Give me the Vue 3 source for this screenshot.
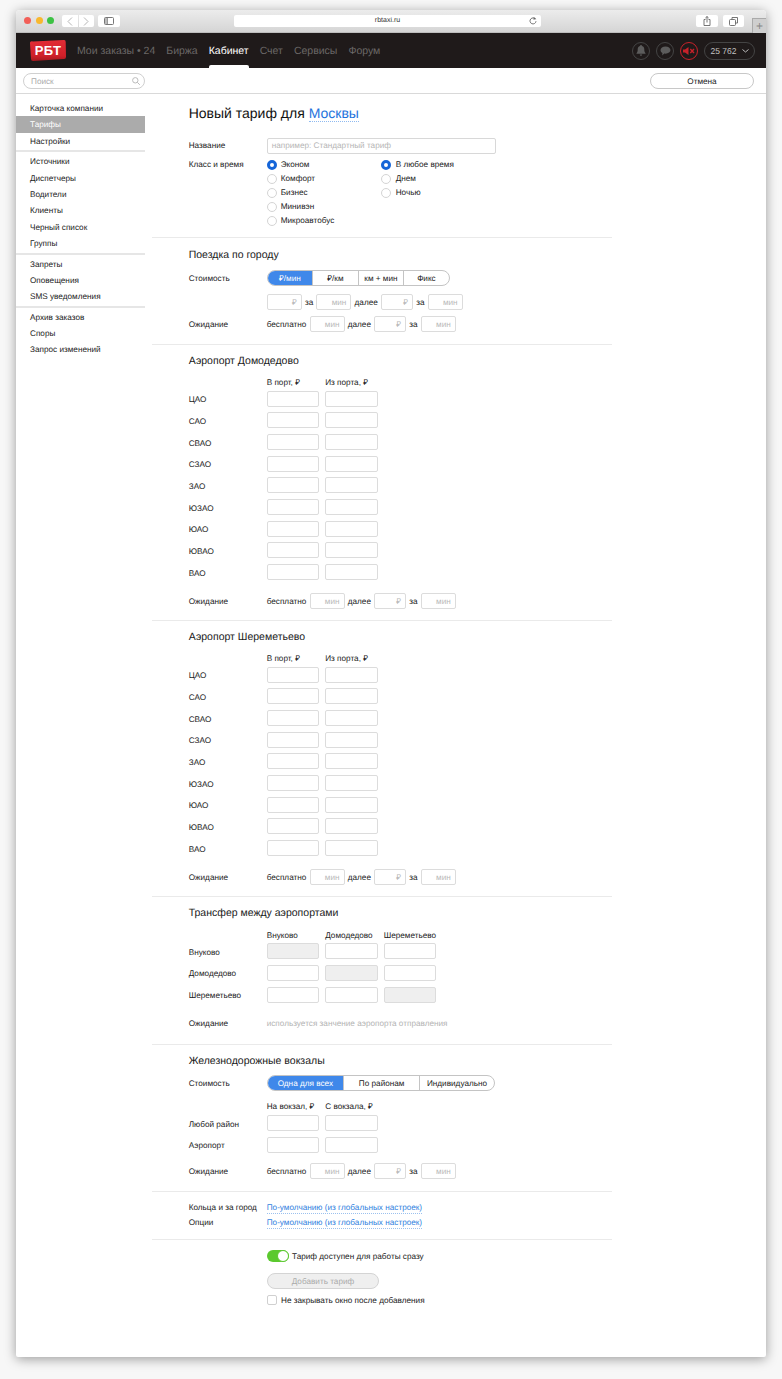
<script setup>
const nav = [
  { t: 'Мои заказы • 24' }, { t: 'Биржа' }, { t: 'Кабинет', active: true },
  { t: 'Счет' }, { t: 'Сервисы' }, { t: 'Форум' }
]
const sideGroups = [
  [{ t: 'Карточка компании' }, { t: 'Тарифы', active: true }, { t: 'Настройки' }],
  [{ t: 'Источники' }, { t: 'Диспетчеры' }, { t: 'Водители' }, { t: 'Клиенты' }, { t: 'Черный список' }, { t: 'Группы' }],
  [{ t: 'Запреты' }, { t: 'Оповещения' }, { t: 'SMS уведомления' }],
  [{ t: 'Архив заказов' }, { t: 'Споры' }, { t: 'Запрос изменений' }]
]
const classes = ['Эконом', 'Комфорт', 'Бизнес', 'Минивэн', 'Микроавтобус']
const times = ['В любое время', 'Днем', 'Ночью']
const districts = ['ЦАО', 'САО', 'СВАО', 'СЗАО', 'ЗАО', 'ЮЗАО', 'ЮАО', 'ЮВАО', 'ВАО']
const airports = ['Аэропорт Домодедово', 'Аэропорт Шереметьево']
const transfers = ['Внуково', 'Домодедово', 'Шереметьево']
</script>

<template>
  <div class="window">
    <div class="toolbar">
      <div class="lights"><i class="red"></i><i class="yellow"></i><i class="green"></i></div>
      <div class="tb-btn back">
        <svg width="6" height="9" viewBox="0 0 6 9"><path d="M5 .5 1 4.5l4 4" fill="none" stroke="#b5b5b5" /></svg>
      </div>
      <div class="tb-btn fwd">
        <svg width="6" height="9" viewBox="0 0 6 9"><path d="M1 .5l4 4-4 4" fill="none" stroke="#b5b5b5" /></svg>
      </div>
      <div class="tb-btn side">
        <svg width="10" height="8" viewBox="0 0 10 8"><rect x=".5" y=".5" width="9" height="7" rx="1" fill="none" stroke="#777" /><path d="M3.5 .5v7" stroke="#777" /><path d="M1 1h2.5v6H1z" fill="#bbb" /></svg>
      </div>
      <div class="address">
        <span>rbtaxi.ru</span>
        <svg class="reload" width="8" height="8" viewBox="0 0 8 8"><path d="M6.6 2.4A3 3 0 1 0 7 4.2" fill="none" stroke="#666" stroke-width=".9" /><path d="M4.6 0v3l2.4-1.5z" fill="#666" /></svg>
      </div>
      <div class="tb-btn share">
        <svg width="8" height="10" viewBox="0 0 8 10"><path d="M2.5 3.5H1v6h6v-6H5.5M4 6.5V.6M2.4 2 4 .5 5.6 2" fill="none" stroke="#666" stroke-width=".9" /></svg>
      </div>
      <div class="tb-btn tabs">
        <svg width="9" height="9" viewBox="0 0 9 9"><path d="M3 2V.5h5.500v5.500H6.500" fill="none" stroke="#666" stroke-width=".9" /><rect x=".5" y="2.500" width="6" height="6" rx="1" fill="none" stroke="#666" stroke-width=".9" /></svg>
      </div>
      <div class="plus">+</div>
    </div>

    <header class="head">
      <div class="logo">
        <svg class="logo-shape" width="36" height="21" viewBox="0 0 36 21">
          <defs><linearGradient id="lg" x1="0" y1="0" x2="0" y2="1"><stop offset="0" stop-color="#e32d36" /><stop offset=".75" stop-color="#cf2029" /><stop offset="1" stop-color="#a5171e" /></linearGradient></defs>
          <path d="M3 1.500 33.500 0a2 2 0 0 1 2.200 2l.3 15a2 2 0 0 1-2 2L3 21a2 2 0 0 1-2-2L0 3.500a2 2 0 0 1 3-2z" fill="url(#lg)" />
        </svg>
        <span>РБТ</span>
      </div>
      <nav class="nav">
        <span v-for="n in nav" :key="n.t" class="nav-item" :class="{ on: n.active }">{{ n.t }}</span>
      </nav>
      <div class="head-right">
        <span class="circle">
          <svg width="10" height="11" viewBox="0 0 10 11"><path d="M5 0a1 1 0 0 1 1 1c1.700.5 2.300 1.900 2.300 3.500 0 2 .4 2.800 1.200 3.700v.6H.5v-.6c.8-.9 1.200-1.700 1.200-3.700C1.700 2.900 2.300 1.500 4 1a1 1 0 0 1 1-1zM3.800 9.500h2.400a1.200 1.200 0 0 1-2.400 0z" fill="#5c5c5c" /></svg>
        </span>
        <span class="circle">
          <svg width="11" height="10" viewBox="0 0 11 10"><path d="M5.500 .5c2.800 0 5 1.600 5 3.600s-2.200 3.600-5 3.600c-.4 0-.8 0-1.200-.1L2.200 9.500l.2-2.400C1.200 6.400.5 5.300.5 4.100c0-2 2.200-3.600 5-3.600z" fill="#5c5c5c" /></svg>
        </span>
        <span class="circle mute">
          <svg width="12" height="8" viewBox="0 0 12 8"><path d="M0 2.500h2L5.500 0v8L2 5.500H0z" fill="#c8222a" /><path d="M7.300 2l3.700 4M11 2 7.300 6" stroke="#c8222a" stroke-width="1.400" /></svg>
        </span>
        <span class="balance">25 762
          <svg width="7" height="4" viewBox="0 0 7 4"><path d="M.5.5l3 2.500 3-2.500" fill="none" stroke="#bbb" /></svg>
        </span>
      </div>
    </header>

    <div class="subbar">
      <div class="search">
        <span>Поиск</span>
        <svg width="8" height="8" viewBox="0 0 8 8"><circle cx="3.300" cy="3.300" r="2.700" fill="none" stroke="#bbb" /><path d="M5.300 5.300 7.800 7.800" stroke="#bbb" /></svg>
      </div>
      <button class="cancel">Отмена</button>
    </div>

    <div class="body">
      <aside class="sidebar">
        <div v-for="(g, i) in sideGroups" :key="i" class="side-group">
          <div v-for="s in g" :key="s.t" class="side-item" :class="{ on: s.active }">{{ s.t }}</div>
        </div>
      </aside>

      <main class="main">
        <section class="sec sec-first">
          <h1 class="title">Новый тариф для <a class="city">Москвы</a></h1>
          <div class="row name-row">
            <label class="lbl plain">Название</label>
            <div class="name-input">например: Стандартный тариф</div>
          </div>
          <div class="choice-row">
            <label class="lbl plain radio-lbl">Класс и время</label>
            <div class="radios">
              <div v-for="(c, i) in classes" :key="c" class="radio-item"><i class="radio" :class="{ sel: i === 0 }"></i>{{ c }}</div>
            </div>
            <div class="radios">
              <div v-for="(c, i) in times" :key="c" class="radio-item"><i class="radio" :class="{ sel: i === 0 }"></i>{{ c }}</div>
            </div>
          </div>
        </section>

        <section class="sec sec-city">
          <h2 class="heading">Поездка по городу</h2>
          <div class="row seg-row">
            <label class="lbl">Стоимость</label>
            <div class="seg seg-four">
              <span class="on">₽/мин</span><span>₽/км</span><span>км + мин</span><span>Фикс</span>
            </div>
          </div>
          <div class="row price-row">
            <span class="lbl"></span>
            <div class="inline">
              <div class="inp sm">₽</div><span>за</span><div class="inp sm">мин</div>
              <span>далее</span><div class="inp sm rub">₽</div><span>за</span><div class="inp sm">мин</div>
            </div>
          </div>
          <div class="row wait">
            <label class="lbl">Ожидание</label>
            <div class="inline">
              <span>бесплатно</span><div class="inp sm">мин</div>
              <span>далее</span><div class="inp sm rub">₽</div><span>за</span><div class="inp sm">мин</div>
            </div>
          </div>
        </section>

        <section v-for="a in airports" :key="a" class="sec sec-air">
          <h2 class="heading">{{ a }}</h2>
          <div class="row cols">
            <span class="lbl"></span>
            <span class="col">В порт, ₽</span><span class="col">Из порта, ₽</span>
          </div>
          <div class="grid-rows">
            <div v-for="d in districts" :key="d" class="row grid-row">
              <label class="lbl">{{ d }}</label>
              <div class="inp lg"></div><div class="inp lg"></div>
            </div>
          </div>
          <div class="row wait wait-air">
            <label class="lbl">Ожидание</label>
            <div class="inline">
              <span>бесплатно</span><div class="inp sm">мин</div>
              <span>далее</span><div class="inp sm rub">₽</div><span>за</span><div class="inp sm">мин</div>
            </div>
          </div>
        </section>

        <section class="sec sec-transfer">
          <h2 class="heading">Трансфер между аэропортами</h2>
          <div class="row cols">
            <span class="lbl"></span>
            <span v-for="t in transfers" :key="t" class="col">{{ t }}</span>
          </div>
          <div class="grid-rows">
            <div v-for="(t, i) in transfers" :key="t" class="row grid-row">
              <label class="lbl">{{ t }}</label>
              <div v-for="(c, j) in transfers" :key="c" class="inp lg" :class="{ dis: i === j }"></div>
            </div>
          </div>
          <div class="row wait wait-transfer">
            <label class="lbl">Ожидание</label>
            <span class="hint">используется занчение аэропорта отправления</span>
          </div>
        </section>

        <section class="sec sec-rail">
          <h2 class="heading">Железнодорожные вокзалы</h2>
          <div class="row seg-row rail-seg">
            <label class="lbl">Стоимость</label>
            <div class="seg seg-three">
              <span class="on">Одна для всех</span><span>По районам</span><span>Индивидуально</span>
            </div>
          </div>
          <div class="row cols rail-cols">
            <span class="lbl"></span>
            <span class="col">На вокзал, ₽</span><span class="col">С вокзала, ₽</span>
          </div>
          <div class="grid-rows rail-rows">
            <div v-for="d in ['Любой район', 'Аэропорт']" :key="d" class="row grid-row">
              <label class="lbl">{{ d }}</label>
              <div class="inp lg"></div><div class="inp lg"></div>
            </div>
          </div>
          <div class="row wait wait-rail">
            <label class="lbl">Ожидание</label>
            <div class="inline">
              <span>бесплатно</span><div class="inp sm">мин</div>
              <span>далее</span><div class="inp sm rub">₽</div><span>за</span><div class="inp sm">мин</div>
            </div>
          </div>
        </section>

        <section class="sec sec-links">
          <div class="row link-row"><label class="lbl plain">Кольца и за город</label><a class="link">По-умолчанию (из глобальных настроек)</a></div>
          <div class="row link-row"><label class="lbl plain">Опции</label><a class="link">По-умолчанию (из глобальных настроек)</a></div>
        </section>

        <section class="final">
          <div class="toggle-row"><i class="toggle"><b></b></i>Тариф доступен для работы сразу</div>
          <button class="add">Добавить тариф</button>
          <div class="check-row"><i class="check"></i>Не закрывать окно после добавления</div>
        </section>
      </main>
    </div>
  </div>
</template>

<style>
html, body { margin: 0; background: #f7f7f7; }
#app { height: 1379px; overflow: hidden; }
</style>

<style scoped>
* { box-sizing: border-box; }
.window {
  width: 750px; height: 1347px; margin: 10px 0 0 16px; background: #fff;
  border-radius: 4px 4px 2px 2px; overflow: hidden; position: relative;
  box-shadow: 0 2px 12px rgba(0,0,0,.38);
  font: 8.200px/12px "Liberation Sans", Arial, sans-serif; color: #222;
  text-rendering: geometricPrecision;
}
.toolbar {
  height: 23px; display: flex; align-items: flex-start; padding-top: 5px;
  background: linear-gradient(#ececec, #d5d5d5); border-bottom: 1px solid #bdbdbd;
}
.lights { display: flex; gap: 4.500px; margin: 2px 0 0 8px; width: 38px; }
.lights i { width: 7px; height: 7px; border-radius: 50%; flex: none; }
.red { background: #f25f58; } .yellow { background: #f8b82e; } .green { background: #3cc244; }
.tb-btn { height: 12px; background: #fff; border-radius: 2px; display: flex; align-items: center; justify-content: center; }
.back { width: 16px; margin-left: 0; border-radius: 2px 0 0 2px; }
.fwd { width: 15px; margin-left: 1px; border-radius: 0 2px 2px 0; }
.side { width: 22px; margin-left: 4px; }
.address {
  width: 308px; height: 12px; margin-left: 114px; background: #fff; border-radius: 2px;
  display: flex; align-items: center; justify-content: center; position: relative; font-size: 7px; color: #333;
}
.reload { position: absolute; right: 4px; top: 2px; }
.share { width: 22px; margin-left: 155px; }
.tabs { width: 21px; margin-left: 5px; }
.plus {
  width: 14px; height: 15px; margin: 3px 0 0 8px; border-left: 1px solid #aaa; border-top: 1px solid #aaa;
  color: #888; font-size: 12px; line-height: 14px; text-align: center; background: #cfcfcf;
}
.head { height: 35px; background: #1f1a1a; display: flex; align-items: center; position: relative; }
.logo {
  width: 36px; height: 21px; margin: 0 0 0 14px; position: relative;
  color: #fff; font-weight: 700; font-size: 13px; line-height: 21px; text-align: center; letter-spacing: .3px;
}
.logo-shape { position: absolute; left: 0; top: 0; }
.logo span { position: relative; }
.nav { display: flex; gap: 11px; margin-left: 11px; align-self: stretch; }
.nav-item { font-size: 10.500px; line-height: 36px; color: #6b6867; position: relative; }
.nav-item.on { color: #fff; }
.nav-item.on::after {
  content: ""; position: absolute; left: 0; right: 0; bottom: 0; height: 3px;
  background: #fff; border-radius: 2px 2px 0 0;
}
.head-right { margin-left: auto; margin-right: 11px; display: flex; align-items: center; gap: 6px; }
.circle {
  width: 18px; height: 18px; border-radius: 50%; border: 1px solid #444;
  display: flex; align-items: center; justify-content: center;
}
.circle.mute { border-color: #c8222a; }
.balance {
  width: 51px; height: 18px; border: 1px solid #444; border-radius: 9px; color: #c4c4c4;
  display: flex; align-items: center; justify-content: center; gap: 5px; font-size: 8.500px;
}
.subbar {
  height: 26px; display: flex; align-items: flex-start; justify-content: space-between;
  padding: 5px 12px 0 7px; border-bottom: 1px solid #d9d9d9;
}
.search {
  width: 122px; height: 16px; border: 1px solid #d0d0d0; border-radius: 8px; padding: 0 4px 0 7px;
  display: flex; align-items: center; justify-content: space-between; color: #aaa;
}
.search span { padding-top: 2px; }
.cancel {
  width: 104px; height: 16px; padding: 0; border: 1px solid #c8c8c8; border-radius: 8px; background: #fff;
  font: 8.200px "Liberation Sans", Arial, sans-serif; color: #222; text-rendering: geometricPrecision;
}
.body { display: flex; }
.sidebar { width: 129px; flex: none; padding-top: 6px; }
.side-group { padding-bottom: 1px; margin-bottom: 1px; border-bottom: 2px solid #e6e6e6; }
.side-group:last-child { border: 0; }
.side-item { height: 16.400px; line-height: 18.400px; padding-left: 14px; color: #222; }
.side-item.on { background: #ababab; color: #fff; }
.main { width: 460px; margin-left: 7px; }
.sec { border-bottom: 1px solid #eaeaea; padding-left: 36.700px; }
.sec-first { height: 144px; padding-top: 10px; }
.title { margin: 0; font-size: 14px; line-height: 18px; font-weight: 400; color: #111; }
.city { color: #1e73dc; border-bottom: 1px dotted #8fbaf0; }
.row { display: flex; align-items: center; }
.lbl { width: 78px; flex: none; padding-top: 2px; }
.lbl.plain { padding-top: 0; }
.name-row { margin-top: 16px; height: 16px; }
.name-input {
  width: 229px; height: 16px; border: 1px solid #d8d8d8; border-radius: 2px;
  color: #b5b5b5; line-height: 14px; padding-left: 4px;
}
.choice-row { display: flex; margin-top: 4px; }
.radio-lbl { line-height: 14px; }
.radios { width: 114px; }
.radio-item { display: flex; align-items: center; height: 14px; }
.radio {
  width: 10px; height: 10px; border-radius: 50%; border: 1px solid #d4d4d4; margin-right: 4px; flex: none;
  background: #fff;
}
.radio.sel { border: 3px solid #1565d8; }
.radios + .radios .radio { margin-right: 5px; }
.heading { margin: 0; font-size: 10.500px; line-height: 18px; height: 16px; font-weight: 400; color: #1a1a1a; }
.sec-city { height: 107px; padding-top: 8px; }
.seg-row { margin-top: 8px; height: 16px; }
.seg { display: flex; height: 16px; border: 1px solid #c4c4c4; border-radius: 8px; overflow: hidden; }
.seg span { text-align: center; line-height: 16px; border-left: 1px solid #c4c4c4; color: #222; }
.seg span:first-child { border-left: 0; }
.seg .on { background: #3f88ea; color: #fff; }
.seg-four { width: 183px; }
.seg-four span { width: 46px; } .seg-four span:first-child { width: 45px; }
.seg-three { width: 228px; }
.seg-three span:nth-child(1) { width: 76px; } .seg-three span:nth-child(2) { width: 77px; } .seg-three span:nth-child(3) { width: 75px; }
.price-row { margin-top: 8px; height: 16px; }
.wait { height: 16px; margin-top: 6px; }
.inline { display: flex; align-items: center; gap: 3.200px; }
.inline > span { padding-top: 2px; }
.inp { height: 16px; border: 1px solid #dcdcdc; border-radius: 2px; background: #fff; color: #b8b8b8; flex: none; }
.sm { width: 35px; text-align: right; padding-right: 4px; line-height: 16px; }
.rub { width: 32px; }
.lg { width: 52.500px; margin-right: 6px; }
.lg.dis { background: #efefef; }
.sec-air { height: 276px; padding-top: 7px; }
.cols { margin-top: 9px; height: 12px; }
.col { width: 58.500px; flex: none; white-space: nowrap; }
.grid-rows { margin-top: -1px; }
.grid-row { height: 21.670px; }
.grid-row .lbl { padding-top: 3px; }
.wait-air { margin-top: 9.800px; }
.sec-transfer { height: 148px; padding-top: 7px; }
.sec-transfer .cols { margin-top: 10px; }
.sec-transfer .grid-rows { margin-top: -1.500px; }
.wait-transfer { margin-top: 10px; }
.hint { color: #b3b3b3; padding-top: 2px; }
.sec-rail { height: 147px; padding-top: 7px; }
.rail-seg { margin-top: 7px; }
.rail-cols { margin-top: 10px; }
.rail-rows { margin-top: -.5px; }
.wait-rail { margin-top: 7.500px; }
.sec-links { height: 48px; padding-top: 8px; }
.link-row { height: 15px; }
.link { color: #2f7fe0; border-bottom: 1px dotted #9cc1ee; line-height: 11px; }
.final { padding: 10px 0 0 115px; }
.toggle-row { display: flex; align-items: flex-start; height: 12px; line-height: 14px; }
.toggle { width: 22px; height: 12px; border-radius: 6px; background: #5bc92e; margin-right: 3px; position: relative; flex: none; }
.toggle b { position: absolute; right: 0; top: 0; width: 12px; height: 12px; border-radius: 50%; background: #fff; border: 1px solid #5bc92e; }
.add {
  display: block; width: 112px; height: 16px; margin-top: 11px; padding: 0; border: 1px solid #d4d4d4; border-radius: 8px;
  background: #efefef; color: #aaa; font: 8.200px "Liberation Sans", Arial, sans-serif; text-rendering: geometricPrecision;
}
.check-row { display: flex; align-items: flex-start; height: 12px; margin-top: 5px; line-height: 14px; }
.check { width: 10px; height: 10px; margin-top: 1px; border: 1px solid #d0d0d0; border-radius: 2px; margin-right: 4px; flex: none; }
</style>
